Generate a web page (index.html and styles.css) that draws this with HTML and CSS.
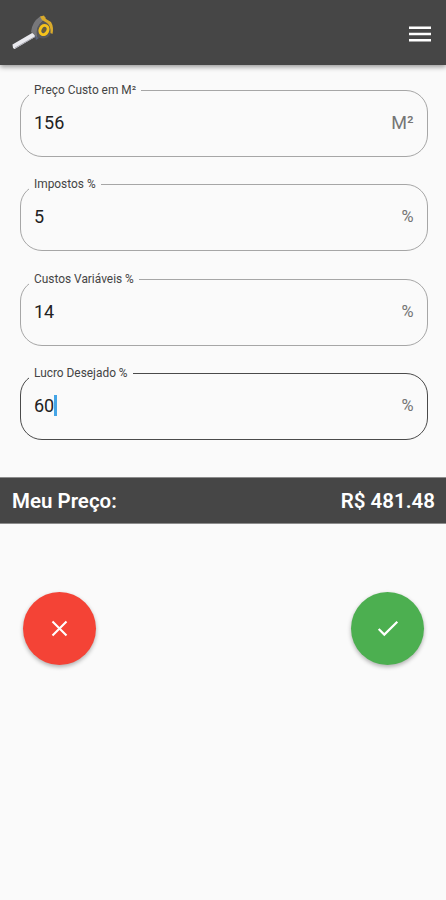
FILE: index.html
```html
<!DOCTYPE html>
<html lang="pt-BR">
<head>
  <meta charset="UTF-8" />
  <meta name="viewport" content="width=device-width, initial-scale=1" />
  <title>Meu Preço</title>
  <link rel="stylesheet" href="styles.css">
</head>
<body>
  <header class="top-bar">
    <svg class="logo" width="44" height="38" viewBox="0 0 44 38">
      <path d="M1.500 29.500 L22 17.500 L25.500 21 L4.500 33.500 L3.500 34 L2 33 Z" fill="#e9e9ee" />
      <path d="M4 33 L25 21" stroke="#a9a9b2" stroke-width="1" />
      <path d="M23 18 L28 23 L25 25 Z" fill="#59627a" />
      <path d="M20 17 Q21 7 29 1.500 L35 2 L31 7 Q25 12 26 22 Z" fill="#77777a" />
      <path d="M26 22 Q24 11 32 6 Q39 5 40 12 L40 18 Q37 25 29 23 Z" fill="#57575a" />
      <path d="M29 1.500 L33 0.500 L35 4 L40 7 Q43 12 41.500 19 L39.500 18 Q40 11 36 8 L31 5 Z" fill="#d9aa2b" />
      <ellipse cx="33" cy="15" rx="3.800" ry="4.800" transform="rotate(28 33 15)" fill="none" stroke="#f5c21b" stroke-width="3" />
      <ellipse cx="33" cy="15" rx="1.300" ry="2" transform="rotate(28 33 15)" fill="#77621f" />
    </svg>
    <svg class="menu-icon" width="22" height="16" viewBox="0 0 22 16">
      <path d="M0 1.800h22M0 8h22M0 14.200h22" stroke="#fff" stroke-width="2.600" />
    </svg>
  </header>

  <main>
    <form class="price-form">
      <fieldset class="field">
        <legend class="label-m2">Preço Custo em M²</legend>
        <span class="value">156</span>
        <span class="suffix">M²</span>
      </fieldset>
      <fieldset class="field">
        <legend class="label-tax">Impostos %</legend>
        <span class="value">5</span>
        <span class="suffix percent">%</span>
      </fieldset>
      <fieldset class="field">
        <legend class="label-costs">Custos Variáveis %</legend>
        <span class="value">14</span>
        <span class="suffix percent">%</span>
      </fieldset>
      <fieldset class="field focused">
        <legend class="label-profit">Lucro Desejado %</legend>
        <span class="value">60</span><span class="caret"></span>
        <span class="suffix percent">%</span>
      </fieldset>
    </form>

    <div class="total">
      <span>Meu Preço:</span>
      <span>R$ 481.48</span>
    </div>

    <div class="actions">
      <button class="fab cancel" type="button" aria-label="Cancelar">
        <svg width="17" height="17" viewBox="0 0 17 17">
          <path d="M1.500 1.500l14 14M15.500 1.500l-14 14" stroke="#fff" stroke-width="2.100" />
        </svg>
      </button>
      <button class="fab confirm" type="button" aria-label="Confirmar">
        <svg width="22" height="17" viewBox="0 0 22 17">
          <path d="M1.700 9l5.600 5.600L20.300 1.700" fill="none" stroke="#fff" stroke-width="2.200" />
        </svg>
      </button>
    </div>
  </main>
</body>
</html>
```
FILE: styles.css
```css
* { margin: 0; padding: 0; box-sizing: border-box; }
body {
  font-family: Roboto, sans-serif;
  min-height: 100vh;
  color: #222;
  background: #fafafa;
}
.top-bar {
  display: flex; align-items: center; justify-content: space-between;
  height: 65px; padding: 0 15px 0 11px;
  background: #464646; box-shadow: 0 2px 5px rgba(0,0,0,0.4);
}
.logo { margin-top: 2px; }
.menu-icon { margin-top: 2px; }

.price-form { display: flex; flex-direction: column; gap: 21.4px; padding: 19px 18.500px 0 20px; }
.field {
  display: flex; align-items: flex-start; min-width: 0; height: 73px;
  padding: 15px 13px 0; border: 1px solid #a6a6a6; border-radius: 22px;
}
.field.focused { border-color: #4a4a4a; }
legend {
  height: 13px; margin-left: -5px; padding: 0 5px;
  font-size: 11.9px; line-height: 13px; color: #444; white-space: nowrap;
}
.label-m2 { width: 112px; }
.label-tax { width: 72px; }
.label-costs { width: 110px; }
.label-profit { width: 104px; }
.value { font-size: 18px; line-height: 22px; }
.caret { width: 3px; height: 21px; background: #45a5e6; }
.suffix { margin-left: auto; font-size: 18px; line-height: 22px; color: #757575; }
.percent { font-size: 16.5px; }

.total {
  display: flex; align-items: center; justify-content: space-between;
  height: 47px; margin-top: 36.8px; padding: 0 11px 0 12px;
  background: #464646; border: solid #8c8c8c; border-width: 1px 0;
  color: #fff; font-size: 20.5px; font-weight: 600;
}
.total span { padding-top: 1px; }

.actions { display: flex; justify-content: space-between; padding: 68px 22px 0 23px; }
.fab {
  display: flex; align-items: center; justify-content: center;
  width: 73px; height: 73px; border: none; border-radius: 50%;
  box-shadow: 0 2px 4px rgba(0,0,0,0.3); cursor: pointer;
}
.cancel { background: #f44336; }
.confirm { background: #4caf50; }
```
